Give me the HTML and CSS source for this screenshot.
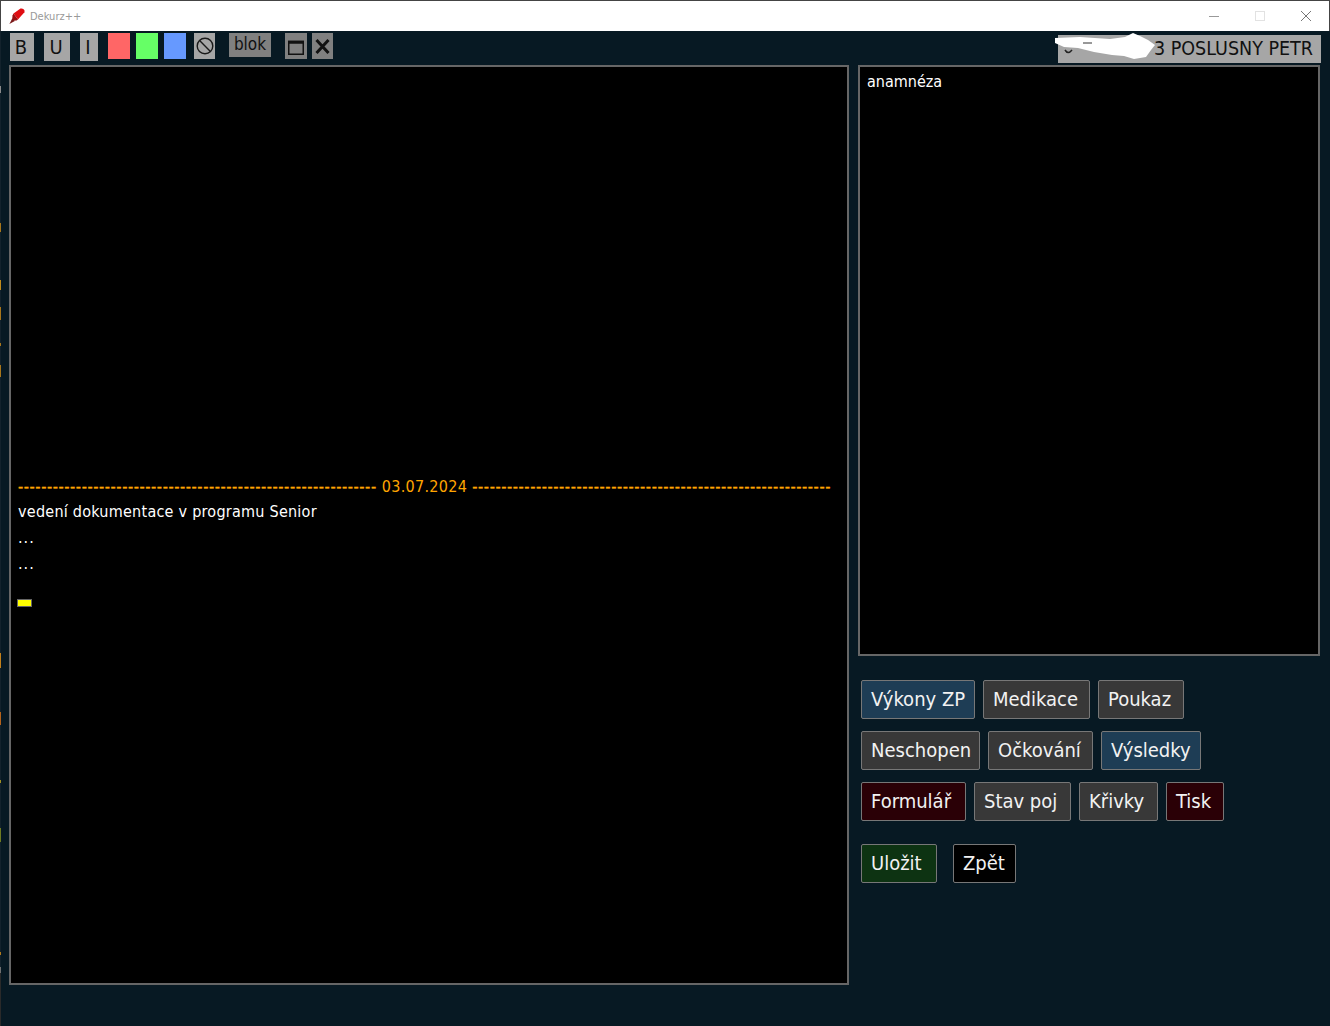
FILE: index.html
```html
<!DOCTYPE html>
<html lang="cs">
<head>
<meta charset="utf-8">
<title>Dekurz++</title>
<link rel="stylesheet" href="styles.css">
</head>
<body>
<div class="window">
  <div class="edge"></div>
  <header class="titlebar">
    <svg class="app-icon" width="17" height="17" viewBox="0 0 17 17">
      <path d="M4.5 5.5 L11.5 .6 Q13 0 14.6 1.2 Q16.2 2.6 15.4 4.2 L9 11.5 Z" fill="#e00d12"/>
      <path d="M4.5 5.5 L9 11.5 L7.6 12.6 L3 12.8 L3.6 7.2 Z" fill="#9a0f12"/>
      <path d="M3.2 10.5 L5.8 13 L.4 16 Z" fill="#7a1a1a"/>
    </svg>
    <span class="app-name">Dekurz++</span>
    <div class="win-controls">
      <svg class="win-btn" width="12" height="12" viewBox="0 0 12 12"><path d="M1 6.5H11" stroke="#999" fill="none"/></svg>
      <svg class="win-btn" width="12" height="12" viewBox="0 0 12 12"><rect x="1.5" y="1.5" width="9" height="9" stroke="#e2e2e2" fill="none"/></svg>
      <svg class="win-btn" width="12" height="12" viewBox="0 0 12 12"><path d="M1 1L11 11M11 1L1 11" stroke="#777" fill="none"/></svg>
    </div>
  </header>

  <div class="toolbar">
    <button class="tool tool-b">B</button>
    <button class="tool tool-u">U</button>
    <button class="tool tool-i">I</button>
    <button class="swatch swatch-red"></button>
    <button class="swatch swatch-green"></button>
    <button class="swatch swatch-blue"></button>
    <button class="tool tool-ban">
      <svg width="18" height="18" viewBox="0 0 18 18"><circle cx="9" cy="9" r="7.8" fill="none" stroke="#1a1a1a" stroke-width="1.4"/><path d="M3.6 3.6L14.4 14.4" stroke="#1a1a1a" stroke-width="1.4"/></svg>
    </button>
    <button class="tool tool-blok">blok</button>
    <button class="tool tool-win">
      <svg width="16" height="15" viewBox="0 0 16 15"><rect x=".75" y="1.5" width="14.5" height="12.75" fill="none" stroke="#111" stroke-width="1.5"/><rect x="0" y=".75" width="16" height="3" fill="#111"/></svg>
    </button>
    <button class="tool tool-close">
      <svg width="15" height="15" viewBox="0 0 15 15"><path d="M1.5 1L13.5 14M13.5 1L1.5 14" stroke="#111" stroke-width="3" fill="none"/></svg>
    </button>
    <div class="patient">
      <span>3 POSLUSNY PETR</span>
      <svg class="scribble" width="104" height="30" viewBox="0 0 104 30">
        <path d="M11 18 Q14 23 18 18M94 12V19" fill="none" stroke="#222" stroke-width="1.5"/>
        <path d="M1 6 L26 5 L56 7 L71 5 L79 1 L86 4 L94 8 L101 13 L97 18 L92 25 L80 27 L70 24 L58 23 L40 20 L24 16 L10 15 L1 11 Z" fill="#fff"/>
        <path d="M29 11H38" fill="none" stroke="#333"/>
      </svg>
    </div>
  </div>

  <main class="content">
    <section class="panel panel-main">
      <div class="date-line"><span class="dashes">--------------------------------------------------------------</span> <span class="date">03.07.2024</span> <span class="dashes">--------------------------------------------------------------</span></div>
      <p class="line">vedení dokumentace v programu Senior</p>
      <p class="line line-dots">...</p>
      <p class="line line-dots">...</p>
      <div class="cursor"></div>
    </section>
    <aside class="side">
      <section class="panel panel-side"><p class="anamneza">anamnéza</p></section>
      <div class="actions">
        <div class="row">
          <button class="act blue btn-vykony">Výkony ZP</button>
          <button class="act grey btn-medikace">Medikace</button>
          <button class="act grey btn-poukaz">Poukaz</button>
        </div>
        <div class="row">
          <button class="act grey btn-neschopen">Neschopen</button>
          <button class="act grey btn-ockovani">Očkování</button>
          <button class="act blue btn-vysledky">Výsledky</button>
        </div>
        <div class="row">
          <button class="act maroon btn-formular">Formulář</button>
          <button class="act grey btn-stav">Stav poj</button>
          <button class="act grey btn-krivky">Křivky</button>
          <button class="act maroon btn-tisk">Tisk</button>
        </div>
        <div class="row row-save">
          <button class="act green btn-ulozit">Uložit</button>
          <button class="act black btn-zpet">Zpět</button>
        </div>
      </div>
    </aside>
  </main>
</div>
</body>
</html>
```
FILE: styles.css
```css
* { box-sizing: border-box; }
html, body { margin: 0; height: 100%; overflow: hidden; }
body { background: #071923; font-family: "DejaVu Sans", "Liberation Sans", sans-serif; font-stretch: condensed; }
button { font-family: inherit; font-stretch: inherit; margin: 0; padding: 0; cursor: default; }
p { margin: 0; }

.window { position: relative; width: 1330px; height: 1026px; display: flex; flex-direction: column; }
.edge {
  position: absolute; left: 0; top: 31px; width: 1px; height: 995px;
  background: linear-gradient(to bottom,
    #13222c 0, #13222c 55px, #8a8a8a 55px, #8a8a8a 62px, #13222c 62px, #13222c 192px,
    #a8761a 192px, #a8761a 201px, #13222c 201px, #13222c 249px,
    #c08a1a 249px, #c08a1a 259px, #13222c 259px, #13222c 276px,
    #a8761a 276px, #a8761a 289px, #13222c 289px, #13222c 312px,
    #a8761a 312px, #a8761a 315px, #13222c 315px, #13222c 334px,
    #a8761a 334px, #a8761a 346px, #13222c 346px, #13222c 622px,
    #c2801a 622px, #c2801a 637px, #13222c 637px, #13222c 681px,
    #b4621a 681px, #b4621a 694px, #13222c 694px, #13222c 749px,
    #a09020 749px, #a09020 752px, #13222c 752px, #13222c 797px,
    #6f7a20 797px, #6f7a20 811px, #13222c 811px, #13222c 921px,
    #b07a1a 921px, #b07a1a 924px, #13222c 924px, #13222c 936px,
    #707070 936px, #707070 942px, #2a2a2a 942px);
}

.titlebar { height: 31px; flex: none; background: #fff; border-top: 1px solid #444; border-left: 1px solid #444; border-right: 1px solid #444; display: flex; align-items: center; padding-left: 8px; }
.app-icon { flex: none; margin-right: 4px; }
.app-name { font-size: 11px; color: #999; }
.win-controls { margin-left: auto; display: flex; gap: 34px; padding-right: 17px; }

.toolbar { height: 34px; flex: none; display: flex; align-items: flex-start; padding: 2px 9px 0 10px; }
.tool { border: 0; background: #a6a6a6; color: #111; font-size: 20px; height: 28px; display: flex; align-items: center; justify-content: center; line-height: 1; }
.tool-b { width: 24px; padding-right: 2px; }
.tool-u { width: 26px; margin-left: 10px; padding-right: 2px; }
.tool-i { width: 18px; margin-left: 10px; padding-right: 2px; }
.swatch { width: 22px; height: 26px; border: 0; }
.swatch-red { background: #ff6666; margin-left: 10px; }
.swatch-green { background: #66ff66; margin-left: 6px; }
.swatch-blue { background: #6699ff; margin-left: 6px; }
.tool-ban { width: 21px; height: 26px; margin-left: 8px; }
.tool-blok { width: 42px; height: 24px; margin-left: 14px; background: #808080; font-size: 17px; padding-bottom: 2px; }
.tool-win { width: 22px; height: 26px; margin-left: 14px; background: #808080; padding-top: 3px; }
.tool-close { width: 21px; height: 26px; margin-left: 5px; background: #808080; }
.patient { position: relative; margin-left: auto; margin-top: 2px; width: 263px; height: 28px; background: #a6a6a6; color: #111; font-size: 19.5px; display: flex; align-items: center; justify-content: flex-end; padding: 0 8px 2px 0; }
.scribble { position: absolute; left: -4px; top: -3px; }

.content { flex: 1; display: flex; padding: 0 10px 41px 9px; gap: 9px; }
.panel { background: #000; border: 2px solid #666; }
.panel-main { width: 840px; height: 920px; padding: 409px 6px 0 7px; }
.side { width: 462px; display: flex; flex-direction: column; }
.panel-side { height: 591px; padding: 5px 7px; }
.anamneza { color: #fff; font-size: 16px; line-height: 20px; }

.date-line { display: flex; align-items: center; justify-content: space-between; width: 813px; height: 20px; color: #ffa500; font-size: 16px; white-space: nowrap; }
.dashes { letter-spacing: .59px; -webkit-text-stroke: .35px #ffa500; }
.date { letter-spacing: .3px; }
.line { color: #fff; font-size: 16px; line-height: 25px; margin-top: 3px; letter-spacing: .25px; }
.line-dots { margin-top: 1px; letter-spacing: 1px; }
.cursor { width: 15px; height: 8px; margin: 23px 0 0 -1px; background: #ffff00; border: 1px solid #666; }

.actions { display: flex; flex-direction: column; gap: 12px; padding: 24px 0 0 3px; }
.row { display: flex; gap: 8px; }
.row-save { gap: 16px; margin-top: 11px; }
.act { height: 39px; padding: 0 0 2px 9px; border: 1px solid #777; border-radius: 2px; color: #f2f2f2; font-size: 20px; line-height: 1; white-space: nowrap; text-align: left; }
.blue { background: #1e3d55; }
.grey { background: #383838; }
.maroon { background: #2a0006; }
.green { background: #0d3312; }
.black { background: #000; }

.btn-vykony { width: 114px; }
.btn-medikace { width: 107px; }
.btn-poukaz { width: 86px; }
.btn-neschopen { width: 119px; }
.btn-ockovani { width: 105px; }
.btn-vysledky { width: 100px; }
.btn-formular { width: 105px; }
.btn-stav { width: 97px; }
.btn-krivky { width: 79px; }
.btn-tisk { width: 58px; }
.btn-ulozit { width: 76px; }
.btn-zpet { width: 63px; }
```
